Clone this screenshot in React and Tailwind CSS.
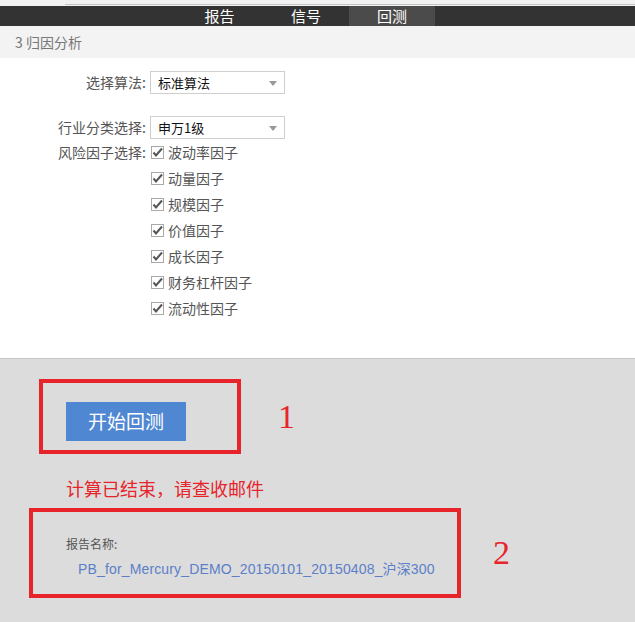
import React from "react";

const factors = ["波动率因子", "动量因子", "规模因子", "价值因子", "成长因子", "财务杠杆因子", "流动性因子"];

function Select({ value }) {
  return (
    <div className="relative flex h-[23px] w-[135px] items-center border border-[#cfcfcf] bg-white pl-[7px] text-[13px] text-[#111]">
      {value}
      <span className="absolute right-[7px] top-[9px] h-0 w-0 border-x-[4px] border-t-[5px] border-x-transparent border-t-[#999]" />
    </div>
  );
}

function Check() {
  return (
    <span className="relative inline-block h-[13px] w-[13px] border border-[#a9a9a9] bg-white">
      <svg viewBox="0 0 13 13" className="absolute -left-px -top-px h-[13px] w-[13px]">
        <path d="M2.5 6.5 L5 9.5 L11 2.5" fill="none" stroke="#555" strokeWidth="2" />
      </svg>
    </span>
  );
}

export default function App() {
  return (
    <div className="flex min-h-[622px] w-full flex-col bg-[#dcdcdc] font-['Noto_Sans_CJK_SC','Liberation_Sans',sans-serif]">
      {/* top strip */}
      <div className="h-[6px] bg-[#f2f2f2] pl-[65px]">
        <div className="h-[5px] border-b border-[#c4c4c4]" />
      </div>

      {/* tabs */}
      <div className="flex h-[20px] bg-[#333333] pl-[176px] text-[15px] leading-[20px] text-white">
        <div className="w-[87px] text-center">报告</div>
        <div className="w-[86px] text-center">信号</div>
        <div className="w-[86px] bg-[#4b4b4b] text-center">回测</div>
      </div>

      <div className="flex h-[32px] items-center bg-[#f3f3f3] pl-[15px] text-[14px] text-[#777]">3 归因分析</div>

      {/* form */}
      <div className="flex flex-col bg-white pb-[37px] pt-[13px] text-[14px] text-[#555]">
        <div className="flex items-center">
          <div className="w-[146px] text-right">选择算法:</div>
          <div className="ml-[4px]"><Select value="标准算法" /></div>
        </div>
        <div className="mt-[22px] flex items-center">
          <div className="w-[146px] text-right">行业分类选择:</div>
          <div className="ml-[4px]"><Select value="申万1级" /></div>
        </div>
        <div className="flex">
          <div className="h-[26px] w-[146px] text-right leading-[26px]">风险因子选择:</div>
          <div className="ml-[5px] flex flex-col">
            {factors.map((f) => (
              <div key={f} className="flex h-[26px] items-center gap-[4px]">
                <Check />
                <span>{f}</span>
              </div>
            ))}
          </div>
        </div>
      </div>

      {/* bottom */}
      <div className="flex flex-1 flex-col border-t border-[#c6c6c6] bg-[#dcdcdc] pt-[20px]">
        <div className="flex items-center">
          <div className="ml-[39px] h-[75px] w-[202px] border-[4px] border-[#e8242b] pl-[23px] pt-[19px]">
            <button className="h-[39px] w-[120px] bg-[#5087d3] text-[19px] text-white">开始回测</button>
          </div>
          <div className="ml-[37px] font-['Liberation_Serif',serif] text-[34px] leading-none text-[#e8242b]">1</div>
        </div>

        <div className="ml-[66px] mt-[23px] text-[18px] leading-[22px] text-[#e8242b]">计算已结束，请查收邮件</div>

        <div className="mt-[9px] flex items-center">
          <div className="ml-[29px] flex h-[90px] w-[432px] flex-col border-[4px] border-[#e8242b] pl-[33px] pt-[22px]">
            <div className="text-[12px] leading-[20px] text-[#555]">报告名称:</div>
            <div className="ml-[12px] mt-[5px] font-['Liberation_Sans','Noto_Sans_CJK_SC',sans-serif] text-[14px] leading-[20px] tracking-[0.15px] text-[#5b7fc8]">
              PB_for_Mercury_DEMO_20150101_20150408_沪深300
            </div>
          </div>
          <div className="ml-[32px] font-['Liberation_Serif',serif] text-[34px] leading-none text-[#e8242b]">2</div>
        </div>
      </div>
    </div>
  );
}
